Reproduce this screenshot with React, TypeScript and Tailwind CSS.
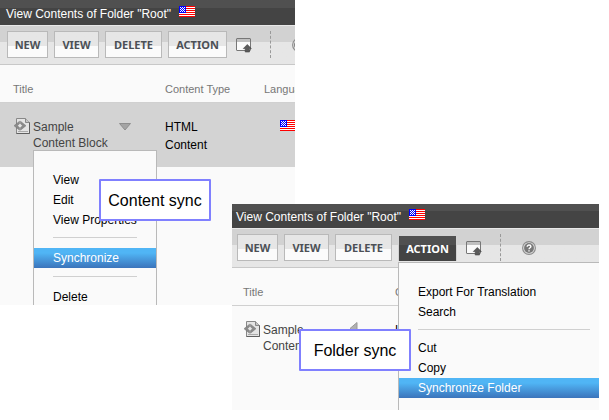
import React from "react";

function FlagIcon() {
  return (
    <svg width="16" height="11" viewBox="0 0 16 11" shapeRendering="crispEdges" className="block">
      <rect width="16" height="11" fill="#fff" />
      {[0, 2, 4, 6, 8, 10].map((y) => (
        <rect key={y} y={y} width="16" height="1" fill="#f00" />
      ))}
      <rect width="7" height="7" fill="#00f" />
      {[1, 3, 5].map((y) =>
        [1, 3, 5].map((x) => <rect key={`${x}-${y}`} x={x} y={y} width="1" height="1" fill="#fff" />)
      )}
      {[2, 4].map((y) =>
        [2, 4].map((x) => <rect key={`${x}-${y}`} x={x} y={y} width="1" height="1" fill="#fff" />)
      )}
    </svg>
  );
}

function ContentIcon() {
  return (
    <svg width="16" height="16" viewBox="0 0 16 16" className="block shrink-0">
      <path d="M2.500 .5h9l4 4v11h-13z" fill="#e4e4e4" stroke="#888" />
      <path d="M11.500 .5v4h4" fill="#c4c4c4" stroke="#888" />
      <path d="M15.500 4.500v11h-13" fill="none" stroke="#606060" />
      <path d="M5.500 3.200 0 7.700 5.500 12.200V9.600L3.400 7.700 5.500 5.800z" fill="#8a8a8a" stroke="#777" strokeWidth=".5" />
      <path d="M6.500 3.200 12 7.700 6.500 12.200V9.600L8.600 7.700 6.500 5.800z" fill="#8a8a8a" stroke="#777" strokeWidth=".5" />
      <path d="M4 13.500h10" stroke="#aaa" />
    </svg>
  );
}

function UpFolderIcon() {
  return (
    <svg width="16" height="15" viewBox="0 0 16 15" className="block">
      <rect x=".5" y=".5" width="14" height="12" rx=".5" fill="#fafafa" stroke="#777" />
      <path d="M1 2h13" stroke="#c0c0c0" strokeWidth="2" />
      <path d="M1 3.500h13" stroke="#999" strokeWidth=".6" />
      <path d="M11.300 6.500 15.300 10.500H13.500V14H9.200V10.500H7.300z" fill="#5a5a5a" stroke="#444" strokeWidth=".6" />
    </svg>
  );
}

function HelpIcon() {
  return (
    <svg width="14" height="14" viewBox="0 0 14 14" className="block">
      <circle cx="7" cy="7" r="6.400" fill="#dedede" stroke="#8c8c8c" strokeWidth="1.100" />
      <circle cx="7" cy="7" r="4.900" fill="#787878" />
      <path d="M5.200 5.800c0-2.500 3.700-2.300 3.700-.2C8.900 6.800 7 6.800 7 8.200M7 9.200v1.400" fill="none" stroke="#fff" strokeWidth="1.400" />
    </svg>
  );
}

function Arrow({ open }: { open?: boolean }) {
  return (
    <svg width="12" height="14" viewBox="0 0 12 14" className="block">
      {open ? (
        <path d="M.5 5.500h11L6 12z" fill="#a4a4a4" stroke="#8e8e8e" />
      ) : (
        <path d="M8 1.500v12L1 7.500z" fill="#b0b0b0" stroke="#999" />
      )}
    </svg>
  );
}

const buttonStyle =
  "h-[27px] border border-[#b9b9b9] bg-linear-to-b from-[#e6e6e6] from-55% to-[#fbfbfb] to-55% pt-px text-[#4c5056]";
const activeStyle =
  "mt-0.5 h-[25px] border-x border-x-[#d3d3d3] bg-linear-to-b from-[#505050] from-36% to-[#444] to-36% text-white";

const buttons = [
  { label: "NEW", width: "w-[41px]" },
  { label: "VIEW", width: "w-[45px]" },
  { label: "DELETE", width: "w-[57px]" },
  { label: "ACTION", width: "w-[59px]" },
];

function FolderView({ actionOpen }: { actionOpen?: boolean }) {
  return (
    <div>
      <header className="flex h-[25px] items-start gap-2 overflow-hidden bg-linear-to-b from-[#505050] from-32% to-[#444] to-32% pt-1.5 pl-1.5 text-white">
        <h2 className="text-xs whitespace-nowrap">View Contents of Folder "Root"</h2>
        <FlagIcon />
      </header>

      {/* Toolbar */}
      <div className="flex h-10 items-start gap-1.5 overflow-hidden border-t border-b border-t-[#e8e8e8] border-b-[#c8c8c8] bg-linear-to-b from-[#d2d2d2] from-42% to-[#e6e6e6] to-42% pt-[5px] pl-[7px]">
        {buttons.map(({ label, width }) => (
          <button
            key={label}
            type="button"
            className={[
              "shrink-0 font-['Noto_Sans'] text-[11px] leading-5 font-bold",
              width,
              actionOpen && label === "ACTION" ? activeStyle : buttonStyle,
            ].join(" ")}
          >
            {label}
          </button>
        ))}
        <button type="button" aria-label="Up one level" className="mt-[7px] ml-[3px] shrink-0">
          <UpFolderIcon />
        </button>
        <span className="ml-3 h-[27px] shrink-0 border-l border-dashed border-[#999]" />
        <button type="button" aria-label="Help" className="mt-[7px] ml-[15px] shrink-0">
          <HelpIcon />
        </button>
      </div>

      <table className="w-full table-fixed text-left text-xs">
        <colgroup>
          <col className="w-[165px]" />
          <col className="w-[99px]" />
          <col />
        </colgroup>
        <thead>
          <tr className="h-[37px] text-[11px] text-[#777]">
            <th className="pt-3 pl-[13px] font-normal">Title</th>
            <th className="pt-3 font-normal">Content Type</th>
            <th className="pt-3 font-normal">Language</th>
          </tr>
        </thead>
        <tbody>
          <tr
            className={[
              "h-[65px] border-t border-[#d0d0d0] align-top",
              actionOpen ? "" : "bg-[#d3d3d3]",
            ].join(" ")}
          >
            <td className="pt-[15px] pl-3.5">
              <div className="flex">
                <ContentIcon />
                <span className="w-[89px] pt-px pl-[3px] leading-4 text-[#444]">Sample Content Block</span>
                <Arrow open={!actionOpen} />
              </div>
            </td>
            <td className="pt-[15px] leading-[18px] text-black">
              HTML
              <br />
              Content
            </td>
            <td className="pt-[17px] pl-4">
              <FlagIcon />
            </td>
          </tr>
        </tbody>
      </table>
    </div>
  );
}

function MenuItem({ label, active }: { label: string; active?: boolean }) {
  return (
    <button
      type="button"
      className={[
        "block h-5 w-full pl-[19px] text-left text-xs whitespace-nowrap",
        active ? "bg-linear-to-b from-[#50b5f5] from-25% to-[#3b74bb] text-white" : "text-black",
      ].join(" ")}
    >
      {label}
    </button>
  );
}

function Callout({ children }: { children: React.ReactNode }) {
  return (
    <div className="flex h-[42px] w-28 items-center justify-center rounded-[1px] border-2 border-[#8080ff] bg-white pt-0.5 text-base whitespace-nowrap text-black">
      {children}
    </div>
  );
}

export default function App() {
  return (
    <main className="min-h-screen bg-white pb-2.5 font-['Liberation_Sans',sans-serif]">
      {/* Content item menu */}
      <section className="relative mr-[314px] h-[305px] overflow-hidden bg-[#fafafa]">
        <FolderView />
        <div className="absolute top-[150px] left-[33px] w-[124px] border border-[#b9b9b9] bg-[#fafafa] pt-[19px] pb-5">
          <MenuItem label="View" />
          <MenuItem label="Edit" />
          <MenuItem label="View Properties" />
          <hr className="mx-[19px] mt-[7px] mb-2.5 border-[#d0d0d0]" />
          <MenuItem label="Synchronize" active />
          <hr className="mx-[19px] mt-2 mb-2.5 border-[#d0d0d0]" />
          <MenuItem label="Delete" />
        </div>
        <div className="absolute top-[179px] left-[99px]">
          <Callout>Content sync</Callout>
        </div>
      </section>

      {/* Folder action menu, overlapping the lower right */}
      <section className="relative -mt-[101px] mr-2.5 ml-[232px] h-[206px] overflow-hidden bg-[#fafafa]">
        <div className="-mt-px -ml-0.5">
          <FolderView actionOpen />
        </div>
        <div className="absolute top-[58px] right-0 left-[166px] border-t border-l border-[#b9b9b9] bg-[#fafafa] pt-[19px] pb-3">
          <MenuItem label="Export For Translation" />
          <MenuItem label="Search" />
          <hr className="mt-[7px] mr-[9px] mb-2 ml-[19px] border-[#d0d0d0]" />
          <MenuItem label="Cut" />
          <MenuItem label="Copy" />
          <MenuItem label="Synchronize Folder" active />
        </div>
        <div className="absolute top-[125px] left-[67px]">
          <Callout>Folder sync</Callout>
        </div>
      </section>
    </main>
  );
}
